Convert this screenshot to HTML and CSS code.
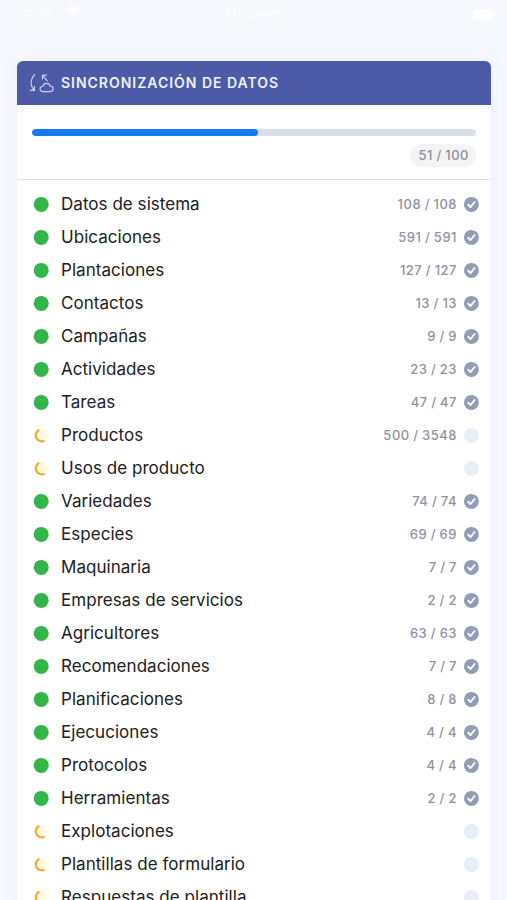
FILE: index.html
```
<!DOCTYPE html>
<html lang="es">
<head>
    <meta charset="UTF-8">
    <meta name="viewport" content="width=device-width, initial-scale=1.0">
    <title>Sincronización de datos</title>
    <link rel="stylesheet" href="styles.css">
</head>
<body>
    <svg class="sprite">
        <symbol id="check" viewBox="0 0 16 16">
            <circle cx="8.4" cy="8.4" r="7.5" fill="#929db5"/>
            <path d="M5.2 8.7l2.3 2.4 4.1-5.1" fill="none" stroke="#fff" stroke-width="1.8" stroke-linecap="round" stroke-linejoin="round"/>
        </symbol>
        <symbol id="pending" viewBox="0 0 16 16">
            <circle cx="8.4" cy="8.4" r="7.5" fill="#e8eef6"/>
        </symbol>
        <symbol id="done" viewBox="0 0 16 16">
            <circle cx="8.2" cy="8.4" r="7.5" fill="#32b64a"/>
        </symbol>
        <symbol id="loading" viewBox="0 0 16 16">
            <circle cx="8.2" cy="8.4" r="6.6" fill="#fffae0"/>
            <path d="M6.2 2.8A6 6 0 0 0 11.5 13.7" fill="none" stroke="#f8aa32" stroke-width="2.3"/>
        </symbol>
    </svg>

    <div class="status-bar">
        <div class="status-left">
            <span>20:51</span>
            <svg width="14" height="10" viewBox="0 0 14 10"><path d="M0 3.5Q7-3 14 3.5L7 10z" fill="#fff"/></svg>
        </div>
        <span class="app-name">Mi Campo</span>
        <svg class="battery" width="23" height="11" viewBox="0 0 23 11"><rect width="20.5" height="11" rx="3" fill="#fff"/><rect x="21.5" y="3.5" width="1.5" height="4" rx=".7" fill="#fff"/></svg>
    </div>

    <div class="card">
        <div class="card-header">
            <svg class="sync-icon" width="25" height="20" viewBox="0 0 25 20">
                <path d="M6 1.2C2.2 4.7 .2 11 4.8 16.9M.9 17.3h4.5v-4.4M13.5 2.2h4.3M13.5 2.2v4.3M13.5 2.2l5 6M14.2 18.6c-4 0-4.2-5.2-.4-5.1.8-4.2 6.8-3.9 7.2-.5 4.1-.2 4.1 5.6.3 5.6z"/>
            </svg>
            <h1>SINCRONIZACIÓN DE DATOS</h1>
        </div>
        <div class="progress">
            <div class="bar"><div class="bar-fill" style="width: 51%"></div></div>
            <span class="total">51 / 100</span>
        </div>
        <ul class="list">
            <li><svg><use href="#done"/></svg><p>Datos de sistema</p><span>108 / 108</span><svg><use href="#check"/></svg></li>
            <li><svg><use href="#done"/></svg><p>Ubicaciones</p><span>591 / 591</span><svg><use href="#check"/></svg></li>
            <li><svg><use href="#done"/></svg><p>Plantaciones</p><span>127 / 127</span><svg><use href="#check"/></svg></li>
            <li><svg><use href="#done"/></svg><p>Contactos</p><span>13 / 13</span><svg><use href="#check"/></svg></li>
            <li><svg><use href="#done"/></svg><p>Campañas</p><span>9 / 9</span><svg><use href="#check"/></svg></li>
            <li><svg><use href="#done"/></svg><p>Actividades</p><span>23 / 23</span><svg><use href="#check"/></svg></li>
            <li><svg><use href="#done"/></svg><p>Tareas</p><span>47 / 47</span><svg><use href="#check"/></svg></li>
            <li><svg><use href="#loading"/></svg><p>Productos</p><span>500 / 3548</span><svg><use href="#pending"/></svg></li>
            <li><svg><use href="#loading"/></svg><p>Usos de producto</p><svg><use href="#pending"/></svg></li>
            <li><svg><use href="#done"/></svg><p>Variedades</p><span>74 / 74</span><svg><use href="#check"/></svg></li>
            <li><svg><use href="#done"/></svg><p>Especies</p><span>69 / 69</span><svg><use href="#check"/></svg></li>
            <li><svg><use href="#done"/></svg><p>Maquinaria</p><span>7 / 7</span><svg><use href="#check"/></svg></li>
            <li><svg><use href="#done"/></svg><p>Empresas de servicios</p><span>2 / 2</span><svg><use href="#check"/></svg></li>
            <li><svg><use href="#done"/></svg><p>Agricultores</p><span>63 / 63</span><svg><use href="#check"/></svg></li>
            <li><svg><use href="#done"/></svg><p>Recomendaciones</p><span>7 / 7</span><svg><use href="#check"/></svg></li>
            <li><svg><use href="#done"/></svg><p>Planificaciones</p><span>8 / 8</span><svg><use href="#check"/></svg></li>
            <li><svg><use href="#done"/></svg><p>Ejecuciones</p><span>4 / 4</span><svg><use href="#check"/></svg></li>
            <li><svg><use href="#done"/></svg><p>Protocolos</p><span>4 / 4</span><svg><use href="#check"/></svg></li>
            <li><svg><use href="#done"/></svg><p>Herramientas</p><span>2 / 2</span><svg><use href="#check"/></svg></li>
            <li><svg><use href="#loading"/></svg><p>Explotaciones</p><svg><use href="#pending"/></svg></li>
            <li><svg><use href="#loading"/></svg><p>Plantillas de formulario</p><svg><use href="#pending"/></svg></li>
            <li><svg><use href="#loading"/></svg><p>Respuestas de plantilla</p><svg><use href="#pending"/></svg></li>
        </ul>
    </div>
</body>
</html>
```
FILE: styles.css
```
* {
    margin: 0;
    padding: 0;
    box-sizing: border-box;
    font-family: Inter, "Liberation Sans", sans-serif;
}

body {
    height: 900px;
    overflow: hidden;
    background: #f7f8fe;
}

.sprite {
    display: none;
}

.status-bar {
    display: grid;
    grid-template-columns: 1fr auto 1fr;
    align-items: center;
    height: 61px;
    padding: 0 11px 33px 17px;
    color: rgba(255, 255, 255, 0.7);
    font-size: 13px;
    font-weight: 500;
}

.status-left {
    display: flex;
    gap: 15px;
}

.battery {
    justify-self: end;
}

.card {
    width: 474px;
    margin-left: 17px;
    border-radius: 6px 6px 0 0;
    background: #fff;
    box-shadow: 0 0 16px #ecebff;
}

.card-header {
    display: flex;
    align-items: center;
    height: 44px;
    padding: 0 0 1px 12px;
    border-radius: 6px 6px 0 0;
    background: #4d5aa7;
    color: #eef1ff;
}

.sync-icon {
    margin-right: 7px;
    fill: none;
    stroke: #cbd3f5;
    stroke-width: 1.2;
}

.card-header h1 {
    font-size: 14px;
    font-weight: 600;
    letter-spacing: 0.98px;
}

.progress {
    display: flex;
    flex-direction: column;
    align-items: flex-end;
    height: 75px;
    padding: 24px 15px 0;
    border-bottom: 1px solid #dce1ef;
}

.bar {
    width: 100%;
    height: 7px;
    border-radius: 4px;
    background: #d8dfe9;
    overflow: hidden;
}

.bar-fill {
    height: 100%;
    border-radius: 4px;
    background: #147af3;
}

.total {
    margin-top: 8px;
    padding: 0 7px 0 8px;
    border-radius: 12px;
    background: #f4f4f5;
    color: #8e8d9f;
    font-size: 13px;
    font-weight: 500;
    line-height: 23px;
    letter-spacing: 0.5px;
    word-spacing: -0.4px;
}

.list {
    padding: 7px 12px 0 16px;
    list-style: none;
}

.list li {
    display: flex;
    align-items: center;
    height: 33px;
}

.list svg {
    width: 16px;
    height: 16px;
}

.list p {
    flex: 1;
    margin-left: 12px;
    color: #202022;
    font-size: 17px;
    letter-spacing: 0.04px;
}

.list span {
    margin-right: 6px;
    color: #9291a4;
    font-size: 13px;
    font-weight: 500;
    letter-spacing: 0.5px;
    word-spacing: -0.4px;
}
```
